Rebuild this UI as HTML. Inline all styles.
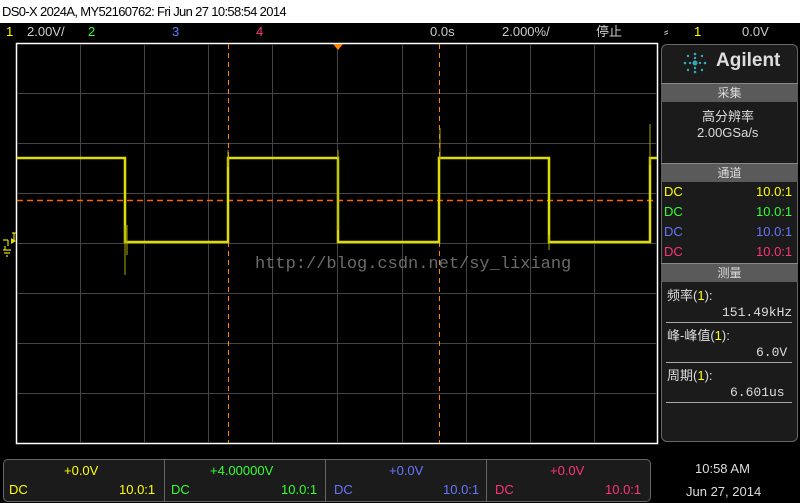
<!DOCTYPE html>
<html><head><meta charset="utf-8"><style>
*{margin:0;padding:0;box-sizing:border-box}
body{width:800px;height:503px;background:#000;position:relative;overflow:hidden;font-family:"Liberation Sans","Noto Sans CJK SC",sans-serif;}
.a{position:absolute;white-space:nowrap}
#title{left:0;top:0;width:800px;height:23px;background:#fff;color:#000;font-size:13px;line-height:23px;padding-left:2px;letter-spacing:-0.65px}
.top{top:23px;font-size:13px;line-height:18px;color:#ccc}
#panel{left:661px;top:44px;width:137px;height:398px;background:#1b1b1b;border:1px solid #666;border-radius:6px}
.hd{position:absolute;left:661px;width:137px;height:19px;background:#5a5a5a;color:#ddd;font-size:12px;text-align:center;line-height:19px;border-top:1px solid #888}
.p{font-size:13px;color:#ddd}
.dc{font-size:13px}
.ln{position:absolute;left:666px;width:126px;height:1px;background:#aaa}
.bb{position:absolute;top:459px;height:43px;background:#1b1b1b;border:1px solid #666}
</style></head><body>
<div class="a" id="title">DS0-X 2024A, MY52160762: Fri Jun 27 10:58:54 2014</div>
<div class="a top" style="left:6px;color:#ff0">1</div>
<div class="a top" style="left:27px">2.00V/</div>
<div class="a top" style="left:88px;color:#3f3">2</div>
<div class="a top" style="left:172px;color:#67f">3</div>
<div class="a top" style="left:256px;color:#f37">4</div>
<div class="a top" style="left:430px">0.0s</div>
<div class="a top" style="left:502px">2.000%/</div>
<div class="a top" style="left:596px">停止</div>
<div class="a top" style="left:664px">⸗</div>
<div class="a top" style="left:694px;color:#ff0">1</div>
<div class="a top" style="left:742px">0.0V</div>
<svg class="a" style="left:0;top:0" width="800" height="503">
<rect x="16.5" y="43.5" width="641" height="400" fill="none" stroke="#fff" stroke-width="1.5"/>
<g stroke="#444" stroke-width="1">
<path d="M80.5 44V443M144.5 44V443M208.5 44V443M272.5 44V443M402.5 44V443M466.5 44V443M530.5 44V443M594.5 44V443"/>
<path d="M17 93.5H657M17 143.5H657M17 193.5H657M17 293.5H657M17 343.5H657M17 393.5H657"/>
<path d="M17 243.5H657M337.5 44V443"/>
</g>
<path d="M228.5 44V443M439.5 44V443" stroke="#f80" stroke-dasharray="5,4"/>
<path d="M17 200.5H657" stroke="#f60" stroke-width="1.5" stroke-dasharray="6,4"/>
<path d="M333 44h10l-5 6z" fill="#f80"/>
<polyline fill="none" stroke="#dd0" stroke-width="2.5" points="17,158 125,158 125,242 228,242 228,158 338,158 338,242 439,242 439,158 549,158 549,242 650,242 650,158 657,158"/>
<path d="M125 225V275M127 225V255M228 150V167M338 150V230M440 128V160M549 235V250M650 124V165" stroke="#aa0" stroke-width="1"/>
<path d="M12 233h4M14 233v8M3 240h5M8 240v6M5 246v4M3 250h8M4 253h6M6 256h2" stroke="#dd0" stroke-width="1.2" fill="none"/>
<path d="M11 238l5 3l-5 3z" fill="#dd0"/>
<text x="255" y="268" font-family="Liberation Mono,monospace" font-size="17" fill="#999" opacity="0.7">http://blog.csdn.net/sy_lixiang</text>
</svg>
<div class="a" id="panel"></div>
<svg class="a" style="left:680px;top:50px" width="30" height="26"><g fill="#3ab"><circle cx="15" cy="13" r="2.5"/><circle cx="15" cy="4" r="1.3"/><circle cx="15" cy="22" r="1.3"/><circle cx="5" cy="13" r="1.3"/><circle cx="25" cy="13" r="1.3"/><circle cx="8" cy="6" r="1.2"/><circle cx="22" cy="6" r="1.2"/><circle cx="8" cy="20" r="1.2"/><circle cx="22" cy="20" r="1.2"/><circle cx="10" cy="13" r="1.2"/><circle cx="20" cy="13" r="1.2"/><circle cx="15" cy="8" r="1.2"/><circle cx="15" cy="18" r="1.2"/></g></svg>
<div class="a" style="left:716px;top:50px;font-size:19px;font-weight:bold;color:#ddd">Agilent</div>
<div class="hd" style="top:83px">采集</div>
<div class="a p" style="left:702px;top:106px">高分辨率</div>
<div class="a p" style="left:697px;top:125px">2.00GSa/s</div>
<div class="hd" style="top:163px">通道</div>
<div class="a dc" style="left:664px;top:184px;color:#ff0">DC</div><div class="a dc" style="left:756px;top:184px;color:#ff0">10.0:1</div>
<div class="a dc" style="left:664px;top:204px;color:#3f3">DC</div><div class="a dc" style="left:756px;top:204px;color:#3f3">10.0:1</div>
<div class="a dc" style="left:664px;top:224px;color:#67f">DC</div><div class="a dc" style="left:756px;top:224px;color:#67f">10.0:1</div>
<div class="a dc" style="left:664px;top:244px;color:#f37">DC</div><div class="a dc" style="left:756px;top:244px;color:#f37">10.0:1</div>
<div class="hd" style="top:263px">测量</div>
<div class="a p" style="left:667px;top:285px">频率(<span style="color:#ff0">1</span>):</div>
<div class="a p" style="left:722px;top:305px;font-family:'Liberation Mono',monospace">151.49kHz</div>
<div class="ln" style="top:322px"></div>
<div class="a p" style="left:667px;top:325px">峰-峰值(<span style="color:#ff0">1</span>):</div>
<div class="a p" style="left:756px;top:345px;font-family:'Liberation Mono',monospace">6.0V</div>
<div class="ln" style="top:362px"></div>
<div class="a p" style="left:667px;top:365px">周期(<span style="color:#ff0">1</span>):</div>
<div class="a p" style="left:730px;top:385px;font-family:'Liberation Mono',monospace">6.601us</div>
<div class="ln" style="top:402px"></div>
<div class="bb" style="left:3px;width:648px;border-radius:5px"></div>
<div class="a" style="left:164px;top:460px;width:1px;height:41px;background:#666"></div>
<div class="a" style="left:325px;top:460px;width:1px;height:41px;background:#666"></div>
<div class="a" style="left:486px;top:460px;width:1px;height:41px;background:#666"></div>
<div class="a dc" style="left:64px;top:463px;color:#ff0">+0.0V</div>
<div class="a dc" style="left:9px;top:482px;color:#ff0">DC</div><div class="a dc" style="left:119px;top:482px;color:#ff0">10.0:1</div>
<div class="a dc" style="left:210px;top:463px;color:#3f3">+4.00000V</div>
<div class="a dc" style="left:171px;top:482px;color:#3f3">DC</div><div class="a dc" style="left:281px;top:482px;color:#3f3">10.0:1</div>
<div class="a dc" style="left:389px;top:463px;color:#67f">+0.0V</div>
<div class="a dc" style="left:334px;top:482px;color:#67f">DC</div><div class="a dc" style="left:443px;top:482px;color:#67f">10.0:1</div>
<div class="a dc" style="left:550px;top:463px;color:#f37">+0.0V</div>
<div class="a dc" style="left:495px;top:482px;color:#f37">DC</div><div class="a dc" style="left:605px;top:482px;color:#f37">10.0:1</div>
<div class="a p" style="left:695px;top:461px">10:58 AM</div>
<div class="a p" style="left:686px;top:484px">Jun 27, 2014</div>
</body></html>
